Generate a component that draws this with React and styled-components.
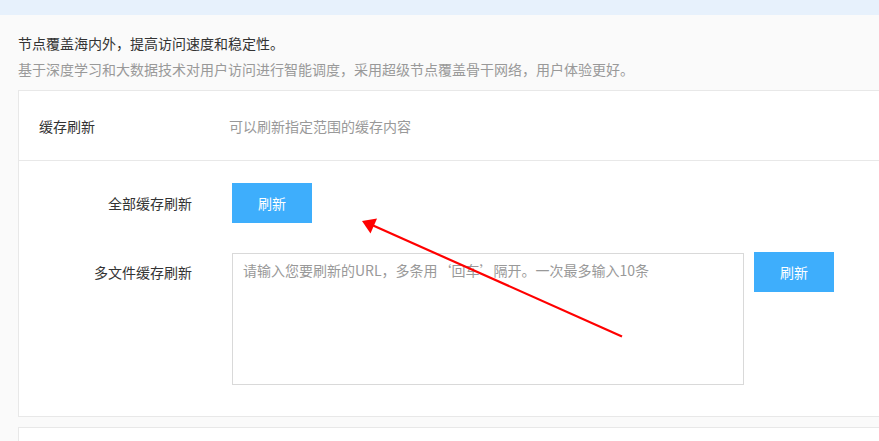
import React from "react";
import styled, { createGlobalStyle } from "styled-components";

const Global = createGlobalStyle`
  html, body { margin: 0; padding: 0; }
  body {
    background: #fafafa;
    font-family: "Microsoft YaHei", "Noto Sans CJK SC", "Noto Sans", sans-serif;
    font-size: 14px;
    color: #333;
    overflow: hidden;
    width: 879px;
    height: 441px;
  }
  * { box-sizing: border-box; }
`;

const Page = styled.div`
  position: relative;
  width: 879px;
  height: 441px;
  overflow: hidden;
`;

const TopBand = styled.div`
  height: 15px;
  background: #e7f1fc;
`;

const Content = styled.div`
  padding: 15px 0 0 18px;
`;

const Intro = styled.div`
  margin-bottom: 8px;
`;

const Lead = styled.p`
  margin: 0;
  line-height: 26px;
  font-size: 14px;
  color: ${(p) => (p.muted ? "#999" : "#333")};
`;

const Card = styled.section`
  width: 900px;
  background: #fff;
  border: 1px solid #e8e8e8;
  margin-bottom: 10px;
`;

const CardHeader = styled.div`
  height: 70px;
  display: flex;
  align-items: center;
  border-bottom: 1px solid #e8e8e8;
  padding-left: 20px;
`;

const HeaderTitle = styled.span`
  width: 190px;
  color: #333;
`;

const HeaderDesc = styled.span`
  color: #999;
`;

const CardBody = styled.div`
  padding: 22px 0 31px;
  display: flex;
  flex-direction: column;
  gap: 30px;
`;

const Row = styled.div`
  display: flex;
  align-items: ${(p) => (p.top ? "flex-start" : "center")};
  gap: 10px;
`;

const Label = styled.label`
  width: 173px;
  margin-right: 30px;
  text-align: right;
  line-height: 40px;
  color: #333;
  margin-top: ${(p) => (p.offset ? "-1px" : "0")};
`;

const Button = styled.button`
  width: 80px;
  height: 40px;
  border: none;
  border-radius: 0;
  background: #3eaefc;
  color: #fff;
  font-family: inherit;
  font-size: 14px;
  cursor: pointer;
  margin-top: ${(p) => (p.offset ? "-1px" : "0")};
`;

const TextArea = styled.textarea`
  width: 512px;
  height: 132px;
  border: 1px solid #d9d9d9;
  padding: 6px 10px;
  font-family: inherit;
  font-size: 14px;
  line-height: 20px;
  color: #333;
  resize: none;
  outline: none;
  &::placeholder { color: #999; }
`;

const NextCard = styled.div`
  width: 900px;
  height: 40px;
  background: #fff;
  border: 1px solid #e8e8e8;
`;

const Annotation = styled.svg`
  position: absolute;
  left: 0;
  top: 0;
  pointer-events: none;
`;

export default function App() {
  return (
    <Page>
      <Global />
      <TopBand />
      <Content>
        <Intro>
          <Lead>节点覆盖海内外，提高访问速度和稳定性。</Lead>
          <Lead muted>基于深度学习和大数据技术对用户访问进行智能调度，采用超级节点覆盖骨干网络，用户体验更好。</Lead>
        </Intro>
        <Card>
          <CardHeader>
            <HeaderTitle>缓存刷新</HeaderTitle>
            <HeaderDesc>可以刷新指定范围的缓存内容</HeaderDesc>
          </CardHeader>
          <CardBody>
            <Row>
              <Label>全部缓存刷新</Label>
              <Button>刷新</Button>
            </Row>
            <Row top>
              <Label offset>多文件缓存刷新</Label>
              <TextArea placeholder="请输入您要刷新的URL，多条用‘回车’隔开。一次最多输入10条" />
              <Button offset>刷新</Button>
            </Row>
          </CardBody>
        </Card>
        <NextCard />
      </Content>
      <Annotation width="879" height="441" viewBox="0 0 879 441">
        <line x1="622" y1="336.5" x2="372" y2="225" stroke="#ff0000" strokeWidth="2.2" />
        <polygon points="362,221 377,218.5 370.5,233.5" fill="#ff0000" />
      </Annotation>
    </Page>
  );
}
